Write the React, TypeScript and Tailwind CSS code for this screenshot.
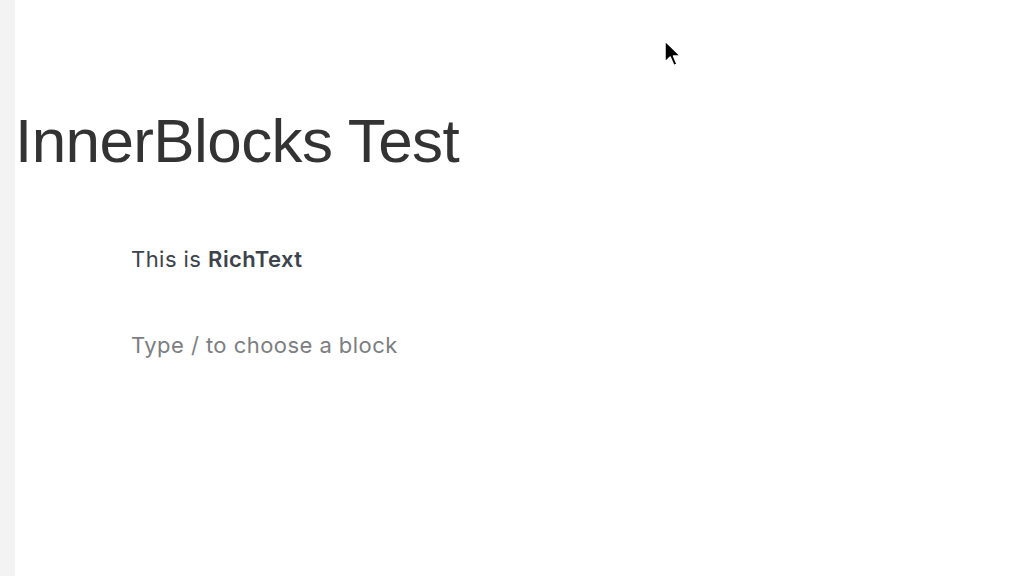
import React from "react";

export default function App() {
  return (
    <div className="relative w-[1024px] h-[576px] overflow-hidden bg-white flex">
      <div className="w-[15px] h-full bg-[#f3f3f3] shrink-0" />
      <div className="flex-1 flex flex-col">
        <h1
          className="mt-[105px] text-[62px] leading-[72px] text-[#333333] tracking-[-0.6px]"
          style={{ fontFamily: '"Liberation Sans", Arial, sans-serif' }}
        >
          InnerBlocks Test
        </h1>
        <div className="ml-[116px] mt-[67px] flex flex-col" style={{ fontFamily: 'Inter, "Noto Sans", sans-serif' }}>
          <p className="text-[22px] leading-[30px] tracking-[0.45px] text-[#3c434a]">
            This is <strong className="font-semibold">RichText</strong>
          </p>
          <p className="mt-[56px] text-[22px] leading-[30px] tracking-[0.45px] text-[#7c7e82]">Type / to choose a block</p>
        </div>
      </div>
      <svg className="absolute left-[663px] top-[39px]" width="22" height="30" viewBox="0 0 22 30">
        <path d="M2 2 L2 23 L7.2 18 L10.8 26.5 L14 25.1 L10.5 17 L17.5 17 Z" fill="#000" stroke="#fff" strokeWidth="1.5" strokeLinejoin="round" />
      </svg>
    </div>
  );
}
